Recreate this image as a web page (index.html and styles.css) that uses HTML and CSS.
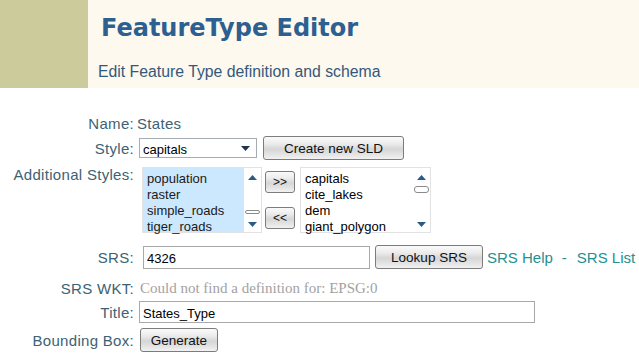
FILE: index.html
```html
<!DOCTYPE html>
<html lang="en">
<head>
    <meta charset="UTF-8">
    <title>FeatureType Editor</title>
    <link rel="stylesheet" href="styles.css">
</head>
<body>
    <div class="header">
        <div class="logo-block"></div>
        <div class="header-text">
            <h1>FeatureType Editor</h1>
            <p class="subtitle">Edit Feature Type definition and schema</p>
        </div>
    </div>

    <div class="form">
        <div class="row row-name">
            <span class="label">Name:</span>
            <span class="value">States</span>
        </div>

        <div class="row row-style">
            <span class="label">Style:</span>
            <div class="select">
                <span>capitals</span>
                <svg class="caret" width="9" height="5" viewBox="0 0 9 5"><path d="M0 0h9L4.5 5z" fill="#1d3550"/></svg>
            </div>
            <button class="btn btn-sld">Create new SLD</button>
        </div>

        <div class="row row-extra">
            <span class="label">Additional Styles:</span>
            <div class="listbox listbox-left">
                <ul>
                    <li>population</li>
                    <li>raster</li>
                    <li>simple_roads</li>
                    <li>tiger_roads</li>
                </ul>
                <div class="scroll scroll-low">
                    <svg width="9" height="5" viewBox="0 0 9 5"><path d="M4.5 0L9 5H0z" fill="#2b5a86"/></svg>
                    <span class="thumb"></span>
                    <svg width="9" height="5" viewBox="0 0 9 5"><path d="M0 0h9L4.5 5z" fill="#2b5a86"/></svg>
                </div>
            </div>
            <div class="move-buttons">
                <button class="btn btn-small">&gt;&gt;</button>
                <button class="btn btn-small">&lt;&lt;</button>
            </div>
            <div class="listbox listbox-right">
                <ul>
                    <li>capitals</li>
                    <li>cite_lakes</li>
                    <li>dem</li>
                    <li>giant_polygon</li>
                </ul>
                <div class="scroll scroll-high">
                    <svg width="9" height="5" viewBox="0 0 9 5"><path d="M4.5 0L9 5H0z" fill="#2b5a86"/></svg>
                    <span class="thumb"></span>
                    <svg width="9" height="5" viewBox="0 0 9 5"><path d="M0 0h9L4.5 5z" fill="#2b5a86"/></svg>
                </div>
            </div>
        </div>

        <div class="row row-srs">
            <span class="label">SRS:</span>
            <input class="input input-srs" type="text" value="4326">
            <button class="btn btn-lookup">Lookup SRS</button>
            <a class="link" href="#">SRS Help</a>
            <span class="link sep">-</span>
            <a class="link" href="#">SRS List</a>
        </div>

        <div class="row row-wkt">
            <span class="label">SRS WKT:</span>
            <span class="wkt">Could not find a definition for: EPSG:0</span>
        </div>

        <div class="row row-title">
            <span class="label">Title:</span>
            <input class="input input-title" type="text" value="States_Type">
        </div>

        <div class="row row-bbox">
            <span class="label">Bounding Box:</span>
            <button class="btn btn-generate">Generate</button>
        </div>
    </div>
</body>
</html>
```

FILE: styles.css
```css
body {
    margin: 0;
    font-family: "Liberation Sans", Arial, sans-serif;
    background-color: #fff;
}
/* ---------------------------header------------------------------ */
.header {
    display: flex;
    height: 88px;
    background-color: #fdf9ee;
}
.logo-block {
    width: 88px;
    background-color: #cbcb9b;
}
.header-text {
    padding-left: 12px;
}
h1 {
    margin: 14px 0 0 1px;
    font-family: "DejaVu Sans", Verdana, sans-serif;
    font-size: 24px;
    font-weight: bold;
    color: #2e5f91;
}
.subtitle {
    margin: 21px 0 0 -2px;
    font-size: 15.8px;
    color: #34587c;
}
/* ---------------------------form------------------------------ */
.form {
    padding-top: 26px;
}
.row {
    display: flex;
    align-items: center;
    font-size: 15px;
    letter-spacing: 0.3px;
    color: #3d6274;
}
.label {
    width: 134px;
    text-align: right;
    flex-shrink: 0;
}
.value {
    margin-left: 3px;
}
.row-name {
    height: 18px;
}
.row-style {
    margin-top: 4px;
}
.row-extra {
    margin-top: 7px;
    align-items: flex-start;
}
.row-extra .label {
    margin-top: -1px;
}
.row-srs {
    margin-top: 12px;
}
.row-wkt {
    margin-top: 10px;
    height: 18px;
}
.row-title {
    margin-top: 4px;
}
.row-bbox {
    margin-top: 5px;
}
/* ---------------------------controls------------------------------ */
.select {
    display: flex;
    align-items: center;
    justify-content: space-between;
    margin-left: 5px;
    width: 107px;
    height: 18px;
    padding: 0 6px 0 3px;
    border: 1px solid #a5acb2;
    background-color: #fff;
    font-size: 13px;
    letter-spacing: 0;
    color: #000;
}
.select span {
    padding-top: 2px;
}
.btn {
    font-family: "Liberation Sans", Arial, sans-serif;
    font-size: 13.5px;
    letter-spacing: 0;
    color: #111;
    height: 24px;
    padding: 0;
    border: 1px solid #7c7c7c;
    border-radius: 3px;
    background: linear-gradient(#fafafa 0%, #ececec 30%, #d6d6d6 55%, #e4e4e4 80%, #f2f2f2 100%);
}
.btn-sld {
    width: 141px;
    margin-left: 6px;
}
.listbox {
    display: flex;
    height: 64px;
    border: 1px solid #e2e2e2;
    background-color: #fff;
}
.listbox ul {
    list-style: none;
    margin: 0;
    padding: 3px 0 0 4px;
    flex: 1;
    font-size: 13px;
    letter-spacing: 0;
    line-height: 16px;
    color: #000;
}
.listbox-left {
    margin-left: 8px;
    width: 118px;
}
.listbox-left ul {
    background-color: #cce8ff;
    color: #1a1a1a;
}
.listbox-right {
    margin-left: 5px;
    width: 129px;
}
.scroll {
    width: 17px;
    display: flex;
    flex-direction: column;
    align-items: center;
    padding: 7px 0 5px;
}
.scroll svg {
    flex-shrink: 0;
}
.thumb {
    display: block;
    width: 13px;
    height: 5px;
    border: 1px solid #8a8a8a;
    border-radius: 3px;
    background-color: #fff;
}
.scroll-low .thumb {
    margin: 30px 0 8px;
}
.scroll-high .thumb {
    margin: 6px 0 auto;
}
.move-buttons {
    display: flex;
    flex-direction: column;
    gap: 14px;
    margin-left: 3px;
    padding-top: 4px;
}
.btn-small {
    width: 30px;
    height: 22px;
    font-size: 12px;
}
.input {
    height: 23px;
    box-sizing: border-box;
    border: 1px solid #a8a8a8;
    font-family: "Liberation Sans", Arial, sans-serif;
    font-size: 13px;
    color: #000;
    padding: 3px 3px 0;
}
.input-srs {
    margin-left: 9px;
    width: 227px;
}
.input-title {
    margin-left: 5px;
    width: 396px;
    height: 22px;
}
.btn-lookup {
    width: 108px;
    margin-left: 5px;
}
.link {
    color: #22918f;
    text-decoration: none;
    letter-spacing: 0;
}
a.link:first-of-type {
    margin-left: 4px;
}
.sep {
    margin: 0 10px 0 9px;
}
.wkt {
    margin-left: 6px;
    font-family: "Liberation Serif", "Times New Roman", serif;
    font-size: 15px;
    letter-spacing: 0;
    color: #a2a2a2;
}
.btn-generate {
    width: 78px;
    margin-left: 6px;
}
```
